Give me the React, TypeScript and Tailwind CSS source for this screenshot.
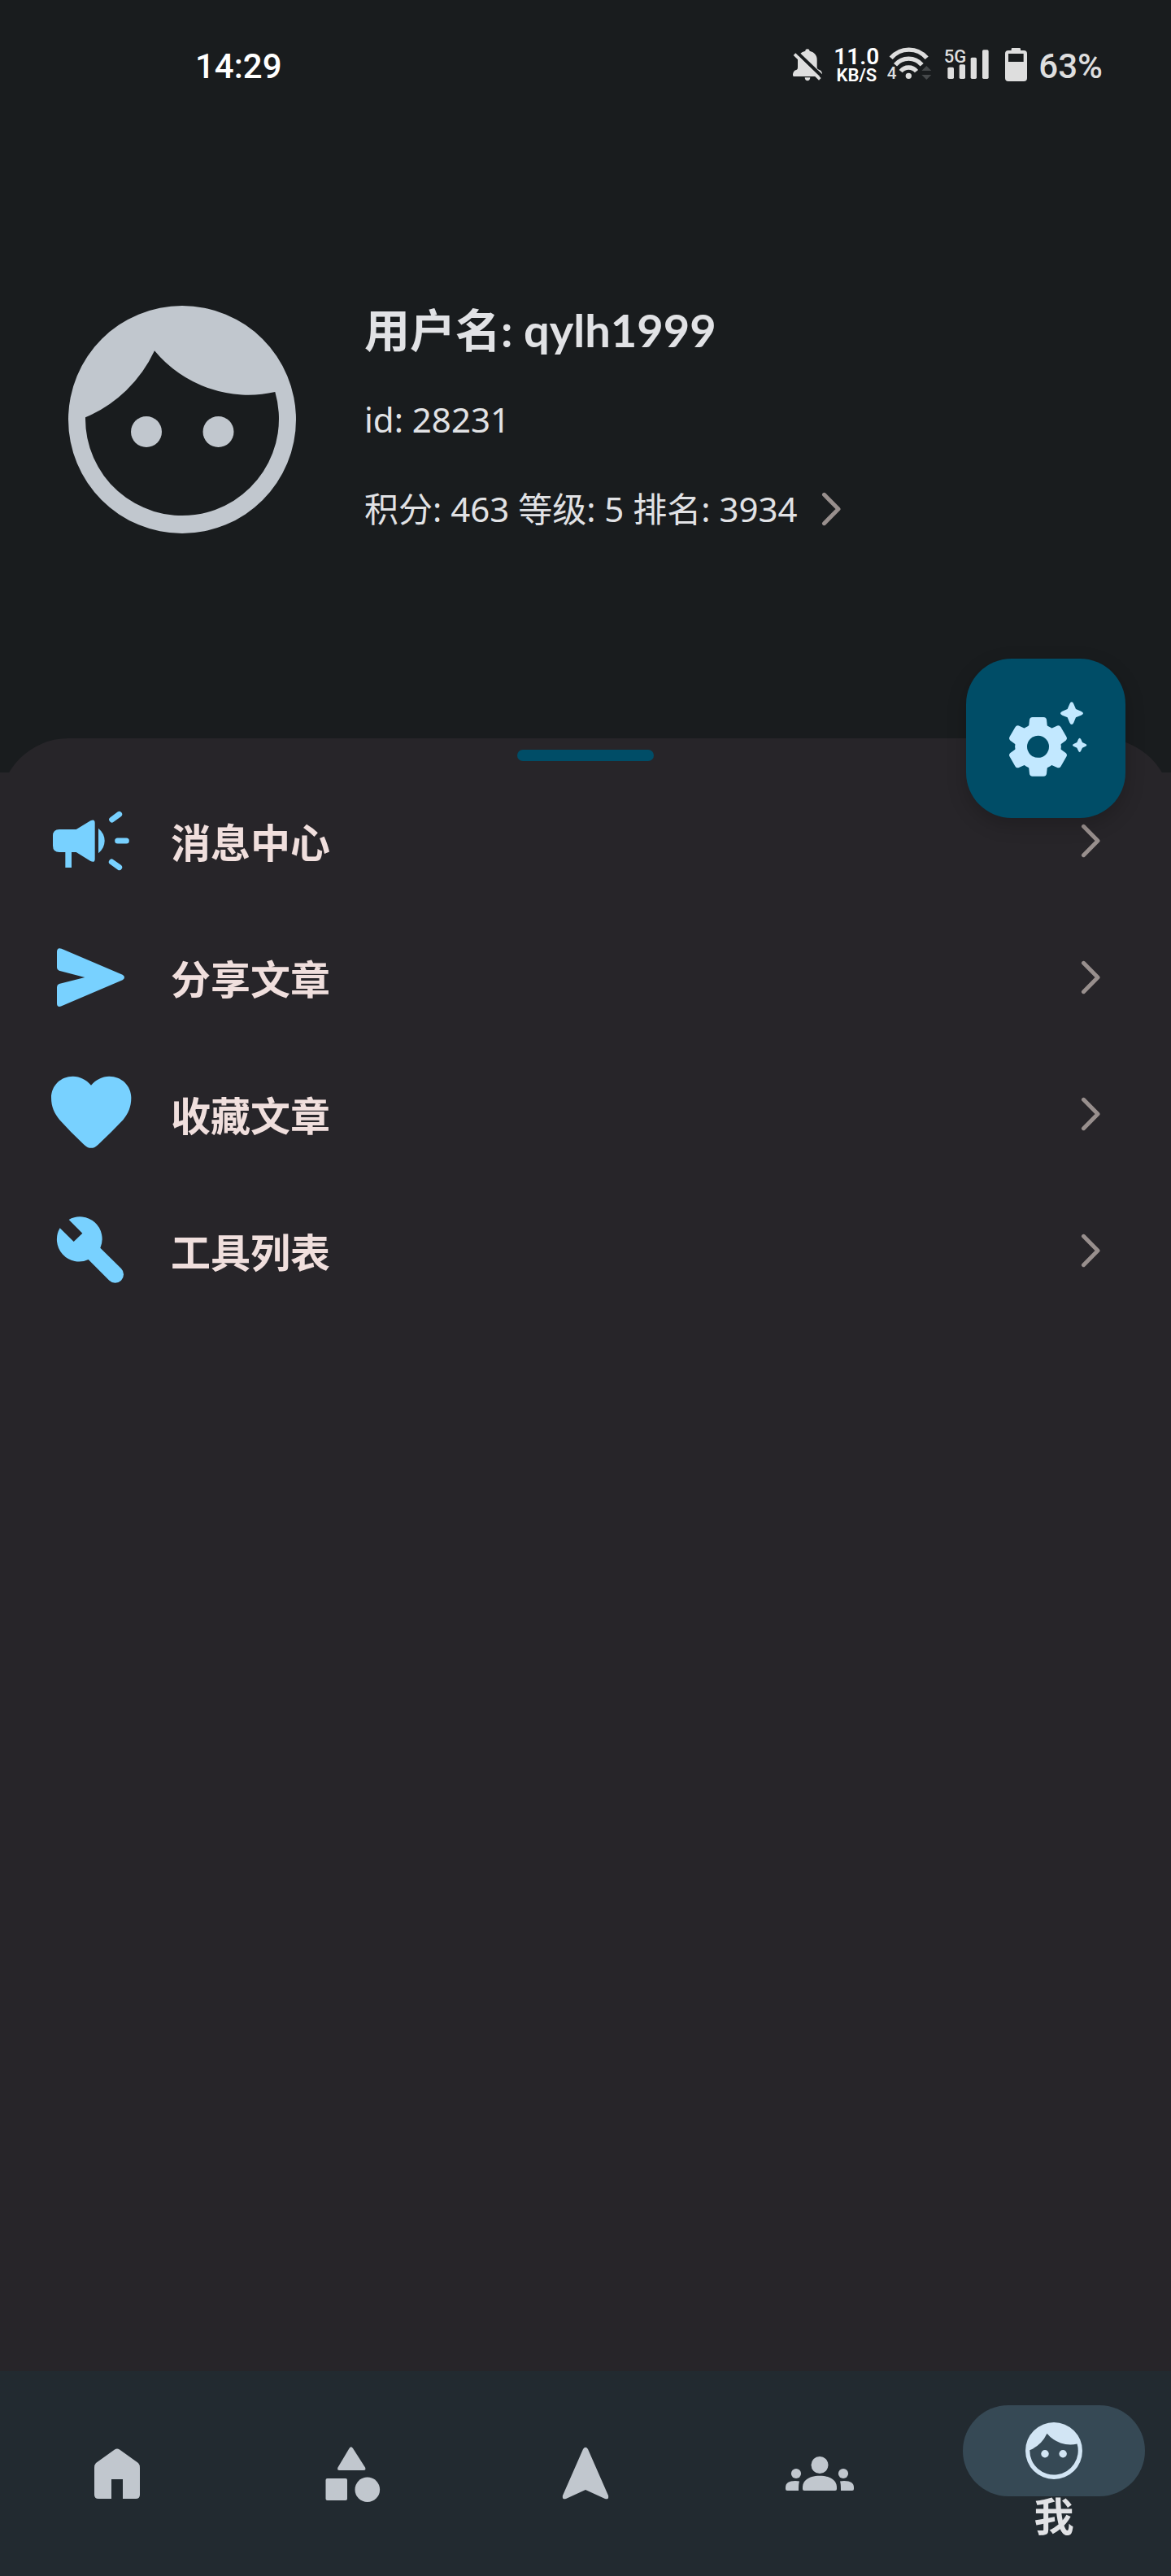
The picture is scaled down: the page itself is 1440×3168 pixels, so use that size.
import React from "react";

const latinCjk = "font-['Noto_Sans','Noto_Sans_CJK_SC',sans-serif]";

function FaceIcon({ className }: { className: string }) {
  return (
    <svg viewBox="0 0 280 280" className={className} fill="currentColor" aria-hidden="true">
      <path
        fillRule="evenodd"
        d="M140 0A140 140 0 1 1 140 280A140 140 0 1 1 140 0ZM21 137.3A119 119 0 1 0 254.3 106A150 150 0 0 1 106 55.3A164 164 0 0 1 21 137.3Z"
      />
      <circle cx="96" cy="155" r="19" />
      <circle cx="184.500" cy="155" r="19" />
    </svg>
  );
}

function Chevron() {
  return (
    <svg
      viewBox="0 0 28 42"
      className="h-[42px] w-[28px] shrink-0 text-[#988f8d]"
      fill="none"
      stroke="currentColor"
      strokeWidth="5"
      strokeLinecap="round"
      strokeLinejoin="round"
      aria-hidden="true"
    >
      <path d="M4.500 3.300L22 21L4.500 38.700" />
    </svg>
  );
}

function StatusBar() {
  return (
    <div className="flex h-[160px] items-center justify-between pl-[240px] pr-[84px] font-['Roboto',sans-serif] text-[42px] leading-[48px] font-medium">
      <time className="pt-1 text-white">14:29</time>
      <div className="flex items-center text-[#dedede]">
        <svg viewBox="102 78 108 144" className="h-[48px] w-[36px]" fill="currentColor" role="img" aria-label="静音">
          <path d="M148 98Q148 91 156 91Q163 91 164 98C182 102 191 115 191 130V160Q192 166 200 168Q210 172 210 184Q209 192 204 192H104Q102 192 102 184Q103 171 116 167Q120 166 120 158V130C120 115 130 102 148 98Z" />
          <path d="M146 196H166Q165 208 156 208Q147 208 146 196Z" />
          <path d="M116 102L214 196" stroke="#191c1e" strokeWidth="12" />
          <path d="M108 110L202 202" stroke="currentColor" strokeWidth="11" />
        </svg>
        <div className="ml-4 flex w-[52px] flex-col items-center font-bold text-white">
          <span className="text-[28px] leading-[26px] font-semibold">11.0</span>
          <span className="text-[22px] leading-[20px] font-semibold">KB/S</span>
        </div>
        <svg viewBox="450 78 165 144" className="ml-3 h-[48px] w-[55px]" fill="currentColor" role="img" aria-label="WLAN">
          <g fill="none" stroke="currentColor" strokeWidth="16">
            <path d="M464 124A86 86 0 0 1 596 124" />
            <path d="M480 149A64 64 0 0 1 578 149" />
            <path d="M500 173A37 37 0 0 1 558 173" />
          </g>
          <circle cx="529" cy="190" r="11" />
          <path d="M595 153L613 171H577ZM577 186H613L595 204Z" fill="#45484a" />
          <text x="449" y="200" fontSize="62" fontWeight="500">4</text>
        </svg>
        <svg viewBox="660 78 165 144" className="ml-[15px] h-[48px] w-[55px]" fill="currentColor" role="img" aria-label="移动信号">
          <rect x="673" y="158" width="23" height="43" rx="5" />
          <rect x="716" y="148" width="22" height="53" rx="5" />
          <rect x="758" y="122" width="22" height="79" rx="5" />
          <rect x="801" y="94" width="23" height="107" rx="5" />
          <text x="659" y="140" fontSize="66" fontWeight="500">5G</text>
        </svg>
        <svg viewBox="885 78 81 144" className="ml-5 h-[48px] w-[27px]" fill="currentColor" aria-hidden="true">
          <path
            fillRule="evenodd"
            d="M908 96V91Q908 87 912 87H938Q942 87 942 91V96H954Q966 96 966 108V198Q966 210 954 210H897Q885 210 885 198V108Q885 96 897 96ZM897 108V138H953V108Z"
          />
        </svg>
        <span className="ml-[14px] pt-1">63%</span>
      </div>
    </div>
  );
}

function SettingsSparkleIcon() {
  const tooth = "M434 354L438 315Q440 306 449 306H490Q499 306 501 315L505 354Z";
  return (
    <svg viewBox="204 90 588 588" className="size-full text-[#c2e8ff]" fill="currentColor" aria-hidden="true">
      <circle cx="469.500" cy="415" r="85" />
      {[0, 60, 120, 180, 240, 300].map((angle) => (
        <path key={angle} d={tooth} transform={`rotate(${angle} 469.5 415)`} />
      ))}
      <circle cx="469.500" cy="415" r="40.500" fill="#004d67" />
      <path d="M593.500 250Q598 250 601 257L609 276L628 284Q636 288 636 292Q636 296 628 299L609 307L601 326Q598 333 593.500 333Q589 333 586 326L578 307L559 299Q552 296 552 292Q552 288 559 284L578 276L586 257Q589 250 593.500 250Z" />
      <path d="M623 383Q626 383 628 388L633 399L644 404Q649 406 649 409Q649 412 644 414L633 419L628 430Q626 435 623 435Q620 435 618 430L613 419L602 414Q597 412 597 409Q597 406 602 404L613 399L618 388Q620 383 623 383Z" />
    </svg>
  );
}

type Item = { label: string; viewBox: string; icon: React.ReactNode };

const menu: Item[] = [
  {
    label: "消息中心",
    viewBox: "168 294 336 336",
    icon: (
      <>
        <path d="M219 420H281L334 388Q350 380 350 396V530Q350 544 334 537L281 504H264V561H241V504H219Q195 504 195 480V444Q195 420 219 420Z" />
        <path d="M363 416Q386 435 386 462Q386 489 363 508Z" />
        <path
          d="M413 384L440 364M434 462H466M412 540L440 560"
          stroke="currentColor"
          strokeWidth="21"
          strokeLinecap="round"
        />
      </>
    ),
  },
  {
    label: "分享文章",
    viewBox: "168 48 336 336",
    icon: (
      <path d="M210 122Q210 104 227 110L452 206Q459 210 459 216Q459 222 452 226L227 322Q210 328 210 312V252Q210 243 218 240L313 216L218 191Q210 188 210 180Z" />
    ),
  },
  {
    label: "收藏文章",
    viewBox: "168 552 336 336",
    icon: (
      <path d="M336 614C318 593 295 581 269 581C224 581 189 615 189 660C189 694 201 718 220 742Q260 787 310 833Q336 858 362 833Q412 787 454 742C473 718 484 694 484 660C484 615 448 581 403 581C377 581 354 593 336 614Z" />
    ),
  },
  {
    label: "工具列表",
    viewBox: "168 1056 336 336",
    icon: (
      <path d="M254 1110A82 82 0 0 1 370 1214L447 1290A31 31 0 0 1 403 1334L326 1257A82 82 0 0 1 221 1141L272 1191L304 1160Z" />
    ),
  },
];

const tabs = [
  {
    label: "首页",
    icon: (
      <path d="M45 12.500L68 29Q70 31 70 35V68Q70 73 65 73H49V49H35V73H19Q14 73 14 68V35Q14 31 16 29L39 12.500Q42 10.500 45 12.500Z" />
    ),
  },
  {
    label: "分类",
    icon: (
      <>
        <path d="M39.500 11Q41.700 7.500 44 11L59 34.500Q60.500 38 57 38H27.500Q24 38 25.500 34.500Z" />
        <rect x="10.500" y="48" width="26.500" height="27" rx="2" />
        <circle cx="61.800" cy="61.700" r="15.300" />
      </>
    ),
  },
  {
    label: "导航",
    icon: <path d="M39 12Q42 7.500 45 12L70 69Q71 74.500 66 73L42 62L18 73Q13 74.500 14 69Z" />,
  },
  {
    label: "社区",
    icon: (
      <>
        <circle cx="42" cy="31.500" r="10.500" />
        <path d="M23 63Q21 63 21 61V59C21 50 30 44.700 42 44.700S63 50 63 59V61Q63 63 61 63Z" />
        <circle cx="13" cy="42" r="6.100" />
        <path d="M16 63H2Q0 63 0 61V59Q0 51 12 51Q15 51 17 51.500Q16 54 16 63Z" />
        <circle cx="71" cy="42" r="6.100" />
        <path d="M68 63H82Q84 63 84 61V59Q84 51 72 51Q69 51 67 51.500Q68 54 68 63Z" />
      </>
    ),
  },
];

export default function App() {
  return (
    <div className={`flex min-h-screen flex-col bg-[#272529] text-[#e1e2e5] ${latinCjk}`}>
      <header className="relative bg-[#191c1e]">
        <StatusBar />
        <section className="flex items-center gap-[84px] px-[84px] pt-[216px] pb-[252px]">
          <FaceIcon className="size-[280px] shrink-0 text-[#c1c7ce]" />
          <div className="flex flex-col items-start gap-[54px] text-[42px] leading-[56px]">
            <h1 className="font-['Lato','Noto_Sans_CJK_SC',sans-serif] text-[56px] font-bold">用户名: qylh1999</h1>
            <p>id: 28231</p>
            <button type="button" className="flex items-center gap-7">
              积分: 463 等级: 5 排名: 3934
              <Chevron />
            </button>
          </div>
        </section>
        <div className="h-[42px] overflow-hidden">
          <div className="flex h-[84px] justify-center rounded-t-[84px] bg-[#272529] pt-[14px]">
            <div className="h-[14px] w-[168px] rounded-full bg-[#004d67]" />
          </div>
        </div>
        <button
          type="button"
          aria-label="设置"
          className="absolute right-[56px] -bottom-[56px] size-[196px] rounded-[56px] bg-[#004d67] shadow-[0_8px_24px_rgba(0,0,0,0.2)]"
        >
          <SettingsSparkleIcon />
        </button>
      </header>

      <main className="flex-1">
        <ul>
          {menu.map((item) => (
            <li key={item.label}>
              <button type="button" className="flex h-[168px] w-full items-center gap-[42px] pr-[84px] pl-[56px] text-left">
                <svg viewBox={item.viewBox} className="size-[112px] shrink-0 text-[#78d1ff]" fill="currentColor" aria-hidden="true">
                  {item.icon}
                </svg>
                <span className="flex-1 pt-1 text-[49px] leading-[56px] font-bold text-[#f0dfdd]">{item.label}</span>
                <Chevron />
              </button>
            </li>
          ))}
        </ul>
      </main>

      <nav className="grid h-[252px] grid-cols-5 bg-[#222a30]">
        {tabs.map((tab) => (
          <button key={tab.label} type="button" aria-label={tab.label} className="flex items-center justify-center">
            <svg viewBox="0 0 84 84" className="size-[84px] text-[#c1c7ce]" fill="currentColor" aria-hidden="true">
              {tab.icon}
            </svg>
          </button>
        ))}
        <button type="button" aria-current="page" className="flex flex-col items-center pt-[42px]">
          <span className="flex h-[112px] w-[224px] items-center justify-center rounded-full bg-[#364955]">
            <FaceIcon className="size-[70px] text-[#d2e5f4]" />
          </span>
          <span className="text-[49px] leading-[48px] font-bold">我</span>
        </button>
      </nav>
    </div>
  );
}
